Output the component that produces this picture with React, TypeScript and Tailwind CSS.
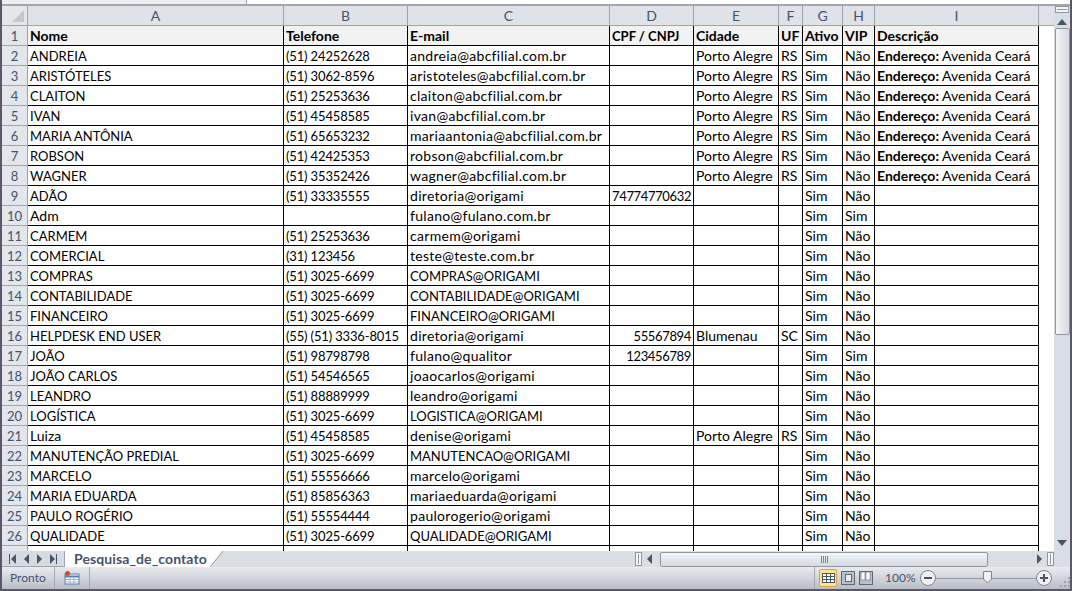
const columns = [
  { name: "A", w: "w-[256px]" },
  { name: "B", w: "w-[124px]" },
  { name: "C", w: "w-[202px]" },
  { name: "D", w: "w-[84px]" },
  { name: "E", w: "w-[85px]" },
  { name: "F", w: "w-[24px]" },
  { name: "G", w: "w-[40px]" },
  { name: "H", w: "w-[32px]" },
  { name: "I", w: "w-[164px]" },
];

type Row = [string, string, string, string, string, string, string, string];

const filial = (nome: string, tel: string, mail: string): Row => [nome, tel, mail, "", "Porto Alegre", "RS", "Sim", "Não"];
const outro = (nome: string, tel: string, mail: string, vip = "Não"): Row => [nome, tel, mail, "", "", "", "Sim", vip];

const rows: Row[] = [
  filial("ANDREIA", "(51) 24252628", "andreia@abcfilial.com.br"),
  filial("ARISTÓTELES", "(51) 3062-8596", "aristoteles@abcfilial.com.br"),
  filial("CLAITON", "(51) 25253636", "claiton@abcfilial.com.br"),
  filial("IVAN", "(51) 45458585", "ivan@abcfilial.com.br"),
  filial("MARIA ANTÔNIA", "(51) 65653232", "mariaantonia@abcfilial.com.br"),
  filial("ROBSON", "(51) 42425353", "robson@abcfilial.com.br"),
  filial("WAGNER", "(51) 35352426", "wagner@abcfilial.com.br"),
  ["ADÃO", "(51) 33335555", "diretoria@origami", "74774770632", "", "", "Sim", "Não"],
  outro("Adm", "", "fulano@fulano.com.br", "Sim"),
  outro("CARMEM", "(51) 25253636", "carmem@origami"),
  outro("COMERCIAL", "(31) 123456", "teste@teste.com.br"),
  outro("COMPRAS", "(51) 3025-6699", "COMPRAS@ORIGAMI"),
  outro("CONTABILIDADE", "(51) 3025-6699", "CONTABILIDADE@ORIGAMI"),
  outro("FINANCEIRO", "(51) 3025-6699", "FINANCEIRO@ORIGAMI"),
  ["HELPDESK END USER", "(55) (51) 3336-8015", "diretoria@origami", "55567894", "Blumenau", "SC", "Sim", "Não"],
  ["JOÃO", "(51) 98798798", "fulano@qualitor", "123456789", "", "", "Sim", "Sim"],
  outro("JOÃO CARLOS", "(51) 54546565", "joaocarlos@origami"),
  outro("LEANDRO", "(51) 88889999", "leandro@origami"),
  outro("LOGÍSTICA", "(51) 3025-6699", "LOGISTICA@ORIGAMI"),
  ["Luiza", "(51) 45458585", "denise@origami", "", "Porto Alegre", "RS", "Sim", "Não"],
  outro("MANUTENÇÃO PREDIAL", "(51) 3025-6699", "MANUTENCAO@ORIGAMI"),
  outro("MARCELO", "(51) 55556666", "marcelo@origami"),
  outro("MARIA EDUARDA", "(51) 85856363", "mariaeduarda@origami"),
  outro("PAULO ROGÉRIO", "(51) 55554444", "paulorogerio@origami"),
  outro("QUALIDADE", "(51) 3025-6699", "QUALIDADE@ORIGAMI"),
];

const cell = "h-[20px] shrink-0 border-r border-b border-black px-[2px] leading-[19px] overflow-hidden whitespace-nowrap";

// caps and digits run narrow in the sheet font, lowercase mail addresses run wide
function textFit(value: string, col: number) {
  if (col === 2 && value !== value.toUpperCase()) return "tracking-[0.3px]";
  if (col === 3) return "text-[13px] leading-[21px] tracking-[-0.35px]";
  if (col === 1) return "text-[13px] leading-[21px] tracking-[-0.15px]";
  if (col < 4 && value === value.toUpperCase()) return "text-[13px] leading-[21px]";
  return "";
}

function RowHead({ n }: { n: number }) {
  return (
    <div className="w-[26px] h-[20px] shrink-0 bg-[#e3e6ea] border-r border-b border-[#9ea5ae] text-center text-[13px] font-normal leading-[20px] text-[#44546a]">
      {n}
    </div>
  );
}

function DataRow({ n, row }: { n: number; row: Row }) {
  return (
    <div className="flex">
      <RowHead n={n} />
      {row.map((value, i) => (
        <div key={i} className={`${cell} ${columns[i].w} ${textFit(value, i)} ${i === 3 ? "text-right" : ""}`}>
          {value}
        </div>
      ))}
      <div className={`${cell} ${columns[8].w}`}>
        {row[4] === "Porto Alegre" && n < 9 ? (
          <>
            <span className="font-bold">Endereço:</span> Avenida Ceará
          </>
        ) : null}
      </div>
    </div>
  );
}

function Triangle({ dir, className = "" }: { dir: "up" | "down" | "left" | "right"; className?: string }) {
  const points = {
    up: "0,6 5,0 10,6",
    down: "0,0 10,0 5,6",
    left: "5,0 5,10 0,5",
    right: "0,0 0,10 5,5",
  }[dir];
  const box = dir === "up" || dir === "down" ? "0 0 10 6" : "0 0 5 10";
  return (
    <svg viewBox={box} className={className} fill="#4a5564">
      <polygon points={points} />
    </svg>
  );
}

function SplitBox({ vertical }: { vertical?: boolean }) {
  return (
    <div className={`bg-[#f4f6f8] border border-[#8f97a3] flex items-center justify-center ${vertical ? "w-[14px] h-[7px]" : "w-[7px] h-[14px]"}`}>
      <div className={vertical ? "w-[10px] h-px bg-[#8f97a3]" : "w-px h-[10px] bg-[#8f97a3]"} />
    </div>
  );
}

function SheetNav() {
  return (
    <div className="w-[63px] h-[16px] flex items-center justify-between px-[7px] bg-[#d6dae1] border-r border-b border-[#9ea5ae]">
      <svg viewBox="0 0 7 10" className="w-[7px] h-[10px]" fill="#4a5564">
        <rect width="1" height="10" />
        <polygon points="7,0 7,10 2,5" />
      </svg>
      <Triangle dir="left" className="w-[5px] h-[10px]" />
      <Triangle dir="right" className="w-[5px] h-[10px]" />
      <svg viewBox="0 0 7 10" className="w-[7px] h-[10px]" fill="#4a5564">
        <rect x="6" width="1" height="10" />
        <polygon points="0,0 0,10 5,5" />
      </svg>
    </div>
  );
}

function Tab() {
  return (
    <div className="relative w-[145px] h-[16px] bg-white text-[14px] font-bold tracking-[0.1px] leading-[15px] text-[#44546a] pl-[9px] whitespace-nowrap">
      Pesquisa_de_contato
      <svg viewBox="0 0 14 16" className="absolute left-[145px] top-0 w-[14px] h-[16px]">
        <polygon points="0,16 13,0 0,0" fill="#fff" />
        <line x1="0" y1="16" x2="13" y2="0" stroke="#8f97a3" />
      </svg>
    </div>
  );
}

function ViewButtons() {
  return (
    <div className="flex items-center gap-[4px]">
      <div className="w-[18px] h-[18px] rounded-[2px] border border-[#d9a441] bg-[#fde48f] flex items-center justify-center">
        <svg viewBox="0 0 13 10" className="w-[13px] h-[10px]" fill="#fff" stroke="#4a5564">
          <rect x="0.5" y="0.5" width="12" height="9" />
          <path d="M4.5 0.5v9M8.5 0.5v9M0.5 3.5h12M0.5 6.5h12" fill="none" />
        </svg>
      </div>
      <div className="w-[14px] h-[14px] border border-[#5f6874] bg-[#b9bfc8] flex items-center justify-center">
        <div className="w-[7px] h-[8px] border border-[#5f6874] bg-[#e8ebef]" />
      </div>
      <svg viewBox="0 0 14 14" className="w-[14px] h-[14px]">
        <rect x="0.5" y="0.5" width="13" height="13" fill="#b9bfc8" stroke="#5f6874" />
        <rect x="2" y="1" width="4" height="8" fill="#fff" stroke="#5f6874" strokeWidth="0.6" />
        <rect x="7" y="1" width="4" height="8" fill="#fff" stroke="#5f6874" strokeWidth="0.6" />
      </svg>
    </div>
  );
}

function ZoomSlider() {
  return (
    <div className="flex items-center">
      <div className="w-[16px] h-[16px] rounded-full border border-[#7d8592] bg-[#eef0f3] flex items-center justify-center">
        <div className="w-[8px] h-[2px] bg-[#4a5564]" />
      </div>
      <div className="relative w-[100px] h-px bg-[#8f97a3]">
        <svg viewBox="0 0 9 13" className="absolute left-[47px] top-[-7px] w-[9px] h-[13px]">
          <polygon points="0.5,0.5 8.5,0.5 8.5,8 4.5,12 0.5,8" fill="#eef0f3" stroke="#7d8592" />
        </svg>
      </div>
      <div className="w-[16px] h-[16px] rounded-full border border-[#7d8592] bg-[#eef0f3] flex items-center justify-center relative">
        <div className="w-[8px] h-[2px] bg-[#4a5564]" />
        <div className="absolute w-[2px] h-[8px] bg-[#4a5564]" />
      </div>
    </div>
  );
}

function Grip() {
  return (
    <svg viewBox="0 0 10 10" className="w-[10px] h-[10px] self-end mb-[2px]" fill="#9ea5ae">
      <rect x="8" y="0" width="2" height="2" />
      <rect x="4" y="4" width="2" height="2" />
      <rect x="8" y="4" width="2" height="2" />
      <rect x="0" y="8" width="2" height="2" />
      <rect x="4" y="8" width="2" height="2" />
      <rect x="8" y="8" width="2" height="2" />
    </svg>
  );
}

export default function App() {
  return (
    <div className="w-[1072px] h-[591px] overflow-hidden flex flex-col bg-[#d9dde4] border-x-2 border-b-2 border-b-[#5b5668] border-x-[#5b5668] font-['Lato',sans-serif] text-[14px] text-black">
      {/* formula bar remainder */}
      <div className="h-[6px] shrink-0 flex border-b-2 border-[#a3a8b0]">
        <div className="w-[245px] bg-[#eceef1] border-r border-[#a3a8b0]" />
        <div className="flex-1 bg-white" />
      </div>

      <div className="flex h-[545px] shrink-0">
        <div className="w-[1052px] bg-white overflow-hidden">
          <div className="flex h-[20px]">
            <div className="w-[26px] shrink-0 bg-[#e3e6ea] border-r border-b border-[#9ea5ae] flex items-end justify-end p-[3px]">
              <svg viewBox="0 0 12 12" className="w-[12px] h-[12px]" fill="#c3c8cf">
                <polygon points="12,0 12,12 0,12" />
              </svg>
            </div>
            {columns.map((col) => (
              <div key={col.name} className={`${col.w} shrink-0 bg-[#dfe3e8] border-r border-b border-[#9ea5ae] text-center leading-[19px] text-[#44546a]`}>
                {col.name}
              </div>
            ))}
            <div className="w-[15px] shrink-0 bg-[#dfe3e8] border-b border-[#9ea5ae]" />
          </div>

          <div className="flex font-bold">
            <RowHead n={1} />
            {["Nome", "Telefone", "E-mail", "CPF / CNPJ", "Cidade", "UF", "Ativo", "VIP", "Descrição"].map((title, i) => (
              <div key={title} className={`${cell} ${columns[i].w} bg-[#f2f2f2] ${i === 3 ? "text-[13px] leading-[21px]" : ""}`}>
                {title}
              </div>
            ))}
          </div>

          {rows.map((row, i) => (
            <DataRow key={i} n={i + 2} row={row} />
          ))}
          <DataRow n={27} row={["", "", "", "", "", "", "", "Não"]} />
        </div>

        {/* vertical scrollbar */}
        <div className="w-[16px] bg-[#d9dde4] flex flex-col items-center">
          <SplitBox vertical />
          <Triangle dir="up" className="w-[10px] h-[6px] mt-[6px]" />
          <div className="w-[15px] h-[307px] mt-[3px] rounded-[2px] border border-[#8f97a3] bg-gradient-to-r from-[#f4f6f8] to-[#d5d9e0]" />
          <div className="flex-1" />
          <Triangle dir="down" className="w-[10px] h-[6px] mb-[5px]" />
        </div>
      </div>

      {/* sheet tabs and horizontal scrollbar */}
      <div className="flex h-[16px] shrink-0 bg-[#d9dde4] items-center">
        <SheetNav />
        <Tab />
        <div className="w-[425px]" />
        <SplitBox />
        <Triangle dir="left" className="w-[5px] h-[10px] ml-[5px]" />
        <div className="w-[328px] h-[15px] ml-[8px] rounded-[2px] border border-[#8f97a3] bg-gradient-to-b from-[#f4f6f8] to-[#d5d9e0] flex items-center justify-center">
          <div className="w-[7px] h-[7px] bg-[repeating-linear-gradient(90deg,#7d8592_0_1px,transparent_1px_2px)]" />
        </div>
        <Triangle dir="right" className="w-[5px] h-[10px] ml-[49px]" />
        <div className="ml-[5px]">
          <SplitBox />
        </div>
      </div>

      {/* status bar */}
      <div className="flex flex-1 items-center bg-gradient-to-b from-[#e9ebef] to-[#b9bec6] text-[12px] text-[#44546a]">
        <div className="w-[53px] pl-[8px] border-r border-[#a3a8b0] h-full leading-[22px]">Pronto</div>
        <div className="w-[35px] h-full border-r border-[#a3a8b0] flex items-center justify-center">
          <svg viewBox="0 0 16 14" className="w-[16px] h-[14px]">
            <rect x="1" y="3" width="14" height="10" fill="#fff" stroke="#5b7fb0" />
            <path d="M1 5.5h14" stroke="#5b7fb0" strokeWidth="2" />
            <path d="M1 8.5h14M1 11h14M6 6v7M10 6v7" stroke="#9db4d3" />
            <circle cx="3.5" cy="2.5" r="2.5" fill="#d9482f" />
          </svg>
        </div>
        <div className="flex-1" />
        <div className="border-l border-[#a3a8b0] pl-[4px] h-full flex items-center mr-[12px]">
          <ViewButtons />
        </div>
        <div className="w-[35px]">100%</div>
        <ZoomSlider />
        <div className="w-[8px]" />
        <Grip />
      </div>
    </div>
  );
}
